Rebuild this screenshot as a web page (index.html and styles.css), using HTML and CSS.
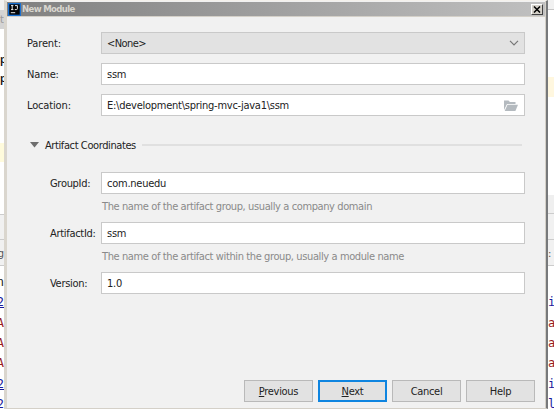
FILE: index.html
```html
<!DOCTYPE html>
<html lang="en">
<head>
    <meta charset="UTF-8">
    <title>New Module</title>
    <link rel="stylesheet" href="styles.css">
</head>
<body>
    <!-- editor, left of the dialog -->
    <div class="editor editor-left">
        <div class="strip toolbar"></div>
        <div class="strip tab">t</div>
        <div class="strip gap-top"></div>
        <div class="strip tree">p</div>
        <div class="strip tree">p</div>
        <div class="strip gap-tree"></div>
        <div class="strip caret-line"></div>
        <div class="strip gap-code"></div>
        <div class="strip panel-head"></div>
        <div class="strip panel-tabs"><span>g</span></div>
        <div class="strip panel-line"></div>
        <div class="strip log">n</div>
        <div class="strip log link">2</div>
        <div class="strip log error">A</div>
        <div class="strip log error">A</div>
        <div class="strip log error">A</div>
        <div class="strip log link">2</div>
        <div class="strip log link">2</div>
    </div>

    <div class="dialog">
        <div class="titlebar">
            <svg class="app-icon" width="13" height="13" viewBox="0 0 13 13">
                <rect width="13" height="13" fill="#1870d2"/>
                <rect x="1.3" y="1.3" width="10.4" height="10.4" fill="#050505"/>
                <path d="M3 2.6h2.4M4.2 2.6v4M3 6.6h2.4M7 2.6h2.4v3q0 1-1 1H6.8M2.8 9.7h4.4" fill="none" stroke="#fff" stroke-width=".9"/>
            </svg>
            <span class="title">New Module</span>
            <button class="close" aria-label="Close">
                <svg width="8" height="7" viewBox="0 0 8 7"><path d="M1 .5l6 6M7 .5l-6 6" stroke="#000" stroke-width="1.5"/></svg>
            </button>
        </div>

        <div class="form">
            <div class="row">
                <label>Parent:</label>
                <div class="field select">
                    <span>&lt;None&gt;</span>
                    <svg width="10" height="6" viewBox="0 0 10 6"><path d="M1 .8l4 4 4-4" fill="none" stroke="#777" stroke-width="1.2"/></svg>
                </div>
            </div>
            <div class="row">
                <label>Name:</label>
                <div class="field"><span>ssm</span></div>
            </div>
            <div class="row">
                <label>Location:</label>
                <div class="field">
                    <span>E:\development\spring-mvc-java1\ssm</span>
                    <svg width="14" height="11" viewBox="0 0 14 11">
                        <path d="M0 10V.5h4.5L6 2h5.5v2H3z" fill="#b4babf"/>
                        <path d="M3.5 4.7H14L11.4 11H.7z" fill="#b4babf"/>
                    </svg>
                </div>
            </div>
        </div>

        <div class="section">
            <svg width="9" height="6" viewBox="0 0 9 6"><path d="M0 0h9L4.5 5.5z" fill="#6e6e6e"/></svg>
            <span class="section-title">Artifact Coordinates</span>
            <div class="rule"></div>
        </div>

        <div class="form coordinates">
            <div class="row">
                <label>GroupId:</label>
                <div class="field"><span>com.neuedu</span></div>
            </div>
            <div class="hint">The name of the artifact group, usually a company domain</div>
            <div class="row">
                <label>ArtifactId:</label>
                <div class="field"><span>ssm</span></div>
            </div>
            <div class="hint">The name of the artifact within the group, usually a module name</div>
            <div class="row">
                <label>Version:</label>
                <div class="field"><span>1.0</span></div>
            </div>
        </div>

        <div class="buttons">
            <button class="btn"><u>P</u>revious</button>
            <button class="btn primary"><u>N</u>ext</button>
            <button class="btn">Cancel</button>
            <button class="btn">Help</button>
        </div>
    </div>

    <!-- editor, right of the dialog -->
    <div class="editor editor-right">
        <div class="strip toolbar"></div>
        <div class="strip gap-top"></div>
        <div class="strip caret-line"></div>
        <div class="strip gap-code"></div>
        <div class="strip status"></div>
        <div class="strip panel-head"></div>
        <div class="strip panel-tabs"><span>:</span></div>
        <div class="strip panel-line"></div>
        <div class="strip log"></div>
        <div class="strip log link">i</div>
        <div class="strip log error">a</div>
        <div class="strip log error">ar</div>
        <div class="strip log error">ar</div>
        <div class="strip log link">i</div>
        <div class="strip log link">l</div>
    </div>
</body>
</html>
```

FILE: styles.css
```css
* {
    box-sizing: border-box;
}

body {
    margin: 0;
    width: 554px;
    height: 409px;
    display: flex;
    overflow: hidden;
    background: #fff;
    color: #222;
    font: 11px/14px "DejaVu Sans Condensed", "DejaVu Sans", sans-serif;
}

/* Editor behind the dialog */
.editor {
    display: flex;
    flex-direction: column;
    height: 409px;
    overflow: hidden;
    flex: none;
}

.editor-left {
    width: 4px;
}

.editor-right {
    width: 6px;
}

.strip {
    flex: none;
    display: flex;
    align-items: center;
    overflow: hidden;
}

.editor-left .strip {
    justify-content: flex-end;
}

.toolbar {
    height: 10px;
    background: #f1f1f1;
}

.editor-right .toolbar {
    border-bottom: 1px solid #c8c8c8;
}

.tab {
    height: 19px;
    background: #d4d4d4;
    color: #999;
}

.editor-left .gap-top {
    height: 20px;
}

.editor-right .gap-top {
    height: 67px;
}

.editor-left .tree {
    height: 19px;
    justify-content: flex-start;
    font: 11px/14px "Noto Sans", sans-serif;
    font-weight: 600;
    color: #111;
}

.gap-tree {
    height: 56px;
}

.caret-line {
    height: 19px;
    background: #fffbdc;
}

.editor-left .gap-code {
    height: 52px;
}

.editor-right .caret-line {
    height: 20px;
    background: #fff7df;
}

.editor-right .gap-code {
    height: 98px;
}

.status {
    height: 18px;
    background: #efefef;
}

.panel-head {
    height: 27px;
    background: #f1f1f1;
    border-top: 1px solid #ccc;
    border-bottom: 1px solid #ccc;
}

.panel-tabs {
    height: 25px;
    background: #f1f1f1;
    padding-top: 2px;
    color: #555;
}

.panel-line {
    height: 1px;
    background: #ccc;
}

.editor-left .panel-head {
    height: 26px;
}

.log {
    height: 20.4px;
    font: 12px/20px "DejaVu Sans Mono", monospace;
}

.panel-line + .log {
    height: 26px;
    padding-top: 6px;
}

.link {
    color: #1a1a9c;
}

.editor-left .link {
    text-decoration: underline;
}

.error {
    color: #981b1b;
}

/* Dialog window */
.dialog {
    width: 544px;
    height: 409px;
    flex: none;
    display: flex;
    flex-direction: column;
    background: #f1f1f1;
    border-style: solid;
    border-width: 1px 2px 1px 3px;
    border-color: #f4f1ec #77797b #d4d0c8 #dad6ce;
    box-shadow: inset -1px 0 #d4d0c8;
}

.titlebar {
    height: 15px;
    margin: 1px 1px 0 0;
    display: flex;
    align-items: center;
    padding: 0 2px 0 1px;
    background: linear-gradient(to right, #808080, #c0c0c0);
    border-bottom: 1px solid #d4d0c8;
    flex: none;
}

.title {
    margin-left: 1px;
    color: #d9d6cf;
    font-size: 9.5px;
    font-weight: bold;
    letter-spacing: -0.65px;
}

.close {
    margin-left: auto;
    width: 12px;
    height: 11px;
    padding: 0;
    display: flex;
    align-items: center;
    justify-content: center;
    background: #d4d0c8;
    border: 1px solid;
    border-color: #fff #404040 #404040 #fff;
}

.form {
    padding: 15px 21px 0 20px;
    display: flex;
    flex-direction: column;
    gap: 9px;
}

.row {
    display: flex;
    align-items: center;
}

label {
    width: 74px;
    flex: none;
    padding-top: 2px;
    letter-spacing: -0.15px;
}

.field {
    flex: 1;
    height: 22px;
    padding: 0 6px 0 5px;
    display: flex;
    align-items: center;
    justify-content: space-between;
    background: #fff;
    border: 1px solid #c9c9c9;
    letter-spacing: -0.25px;
}

.field span {
    padding-top: 2px;
}

.select {
    background: #e2e2e2;
    padding-right: 5px;
}

.select span {
    letter-spacing: -0.55px;
}

.section {
    height: 14px;
    margin: 22px 24px 0 23px;
    display: flex;
    align-items: center;
}

.section-title {
    margin: 0 6px 0 6px;
    padding-top: 2px;
    letter-spacing: -0.4px;
}

.rule {
    flex: 1;
    height: 2px;
    background: #e0e0e0;
}

.coordinates {
    padding: 20px 21px 0 43px;
    gap: 0;
}

.coordinates label {
    width: 51px;
    letter-spacing: -0.3px;
}

.hint {
    height: 28px;
    padding: 6px 0 0 52px;
    color: #8a8a8a;
    letter-spacing: -0.39px;
    white-space: nowrap;
}

.buttons {
    margin: auto 11px 6px;
    display: flex;
    justify-content: flex-end;
    gap: 5px;
}

.btn {
    width: 69px;
    height: 22px;
    padding: 1px 0 0;
    background: #e2e2e2;
    border: 1px solid #b9b9b9;
    color: #222;
    font: inherit;
    letter-spacing: -0.3px;
}

.primary {
    border: 2px solid #0f85e0;
}
```
